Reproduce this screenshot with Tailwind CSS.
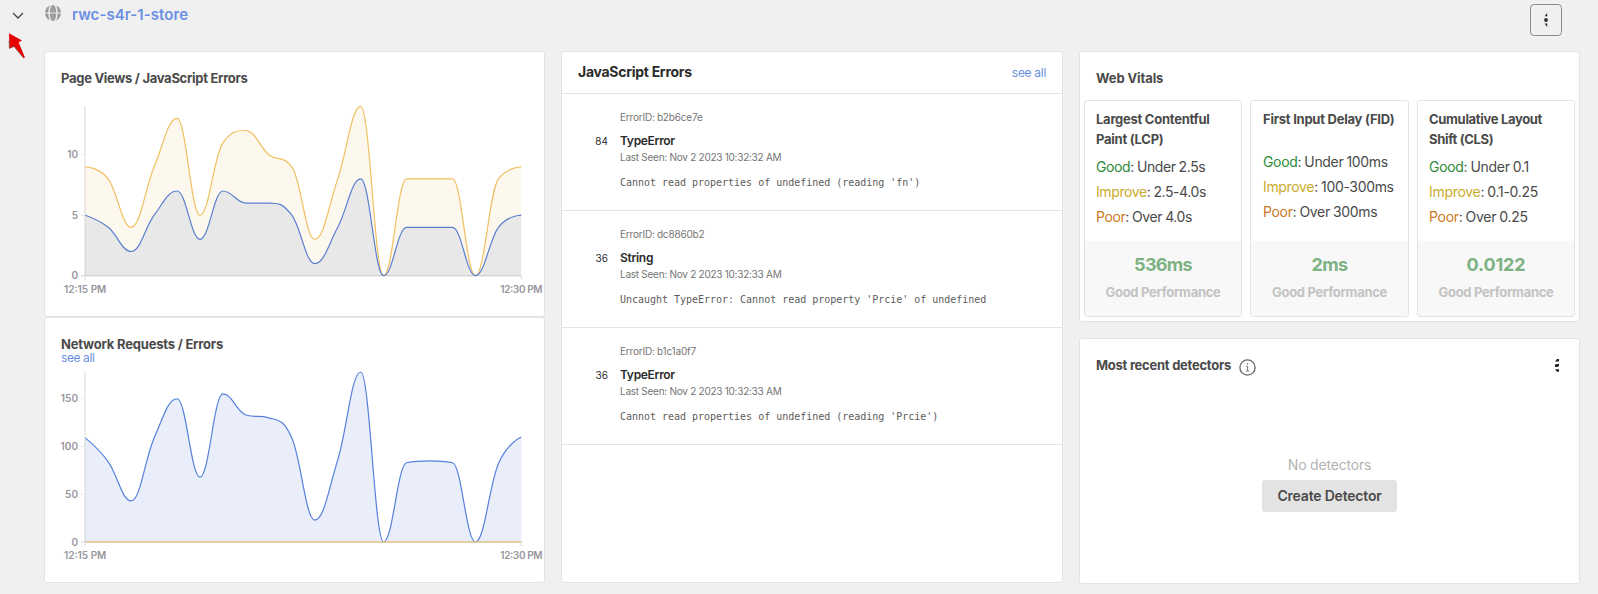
<!DOCTYPE html>
<html lang="en">
<head>
<meta charset="utf-8">
<title>rwc-s4r-1-store</title>
<script src="https://cdn.jsdelivr.net/npm/@tailwindcss/browser@4"></script>
</head>
<body class="w-[1598px] h-[594px] overflow-hidden bg-[#f0f0f0] font-['Inter',sans-serif] text-[#4a4a4a]">
<header class="flex h-[51px] items-start">
  <div class="w-[44px] shrink-0">
    <svg class="block" width="44" height="60" viewBox="0 0 44 60" overflow="visible">
      <path d="M13 13l5 5 5-5" fill="none" stroke="#3c444d" stroke-width="1.3"/>
      <path d="M9 33.2L22 40.6L18.6 42.3L24.8 57.2L23.6 58L14 46.4L9.4 48.4Z" fill="#e60000"/>
      <path d="M24.8 57.2L23.6 58L14 46.4L9.4 48.4L9.1 41" fill="none" stroke="#8d4a4a" stroke-width=".8"/>
    </svg>
  </div>
  <svg class="mt-[5px] ml-px shrink-0" width="16" height="16" viewBox="0 0 16 16">
    <circle cx="8" cy="8" r="8" fill="#999"/>
    <path d="M0 8h16" stroke="#f0f0f0" stroke-width="1" fill="none"/>
    <path d="M8 0v16" stroke="#b4b4b4" stroke-width=".7" fill="none"/>
    <ellipse cx="8" cy="8" rx="4" ry="9" stroke="#f0f0f0" stroke-width="1.4" fill="none"/>
  </svg>
  <a class="ml-[11px] mt-[4px] text-[15px] leading-[22px] font-semibold tracking-[0.07px] text-[#6b8fe3]">rwc-s4r-1-store</a>
  <button class="ml-auto mr-[36px] mt-[4px] flex size-[32px] items-center justify-center rounded-[4px] border border-[#8c8c8c]">
    <svg width="4" height="14" viewBox="0 0 4 14" fill="#2f2f2f"><path d="M3.2 0v3.2H.6z"/><circle cx="2" cy="7" r="1.9"/><path d="M.6 10.6h2.6V14z"/></svg>
  </button>
</header>

<main class="flex h-[533px] pl-[44px] gap-4">
  <section class="flex w-[501px] flex-col">
    <article class="flex h-[266px] flex-col rounded-[3px] border border-[#e3e3e3] bg-white">
      <h2 class="mt-[17px] ml-[16px] h-[19px] text-[13px] leading-[18px] font-bold tracking-[-0.29px] whitespace-nowrap">Page Views / JavaScript Errors</h2>
      <svg id="views" class="block" width="499" height="210" viewBox="45 88 499 210"></svg>
    </article>
    <article class="flex h-[266px] flex-col rounded-[3px] border border-[#e3e3e3] bg-white">
      <h2 class="mt-[17px] ml-[16px] h-[18px] text-[13px] leading-[18px] font-bold tracking-[-0.2px] whitespace-nowrap">Network Requests / Errors</h2>
      <a class="ml-[16px] -mt-[2px] h-[14px] text-[12px] leading-[13px] tracking-[-0.4px] text-[#6b8fe3]">see all</a>
      <svg id="network" class="block" width="499" height="210" viewBox="45 365 499 210"></svg>
    </article>
  </section>

  <section class="h-[532px] w-[502px] rounded-[3px] border border-[#e3e3e3] bg-white">
    <div class="flex h-[42px] items-center justify-between border-b border-[#e3e3e3] px-4">
      <h2 class="-mt-[2px] text-[14px] font-bold tracking-[-0.28px] text-[#2b2b2b]">JavaScript Errors</h2>
      <a class="mt-px text-[12px] tracking-[-0.3px] text-[#6b8fe3]">see all</a>
    </div>
    <div class="flex h-[117px] border-b border-[#e3e3e3]">
      <div class="w-[46px] pt-[40px] text-right text-[10px] leading-[14px] text-[#2b2b2b]">84</div>
      <div class="ml-[12px] pt-[16px] whitespace-nowrap">
        <div class="text-[10px] leading-[14px] tracking-[-0.18px] [word-spacing:-0.5px] text-[#757575]">ErrorID: b2b6ce7e</div>
        <div class="mt-[9px] text-[12px] leading-[16px] font-semibold tracking-[-0.3px] text-[#2b2b2b]">TypeError</div>
        <div class="mt-px text-[10px] leading-[14px] tracking-[-0.26px] text-[#757575]">Last Seen: Nov 2 2023 10:32:32 AM</div>
        <div class="mt-[12px] font-['DejaVu_Sans_Mono',monospace] text-[10px] leading-[14px] tracking-[-0.015px] text-[#5c5c5c]">Cannot read properties of undefined (reading 'fn')</div>
      </div>
    </div>
    <div class="flex h-[117px] border-b border-[#e3e3e3]">
      <div class="w-[46px] pt-[40px] text-right text-[10px] leading-[14px] text-[#2b2b2b]">36</div>
      <div class="ml-[12px] pt-[16px] whitespace-nowrap">
        <div class="text-[10px] leading-[14px] tracking-[-0.18px] [word-spacing:-0.5px] text-[#757575]">ErrorID: dc8860b2</div>
        <div class="mt-[9px] text-[12px] leading-[16px] font-semibold tracking-[-0.3px] text-[#2b2b2b]">String</div>
        <div class="mt-px text-[10px] leading-[14px] tracking-[-0.26px] text-[#757575]">Last Seen: Nov 2 2023 10:32:33 AM</div>
        <div class="mt-[12px] font-['DejaVu_Sans_Mono',monospace] text-[10px] leading-[14px] tracking-[-0.015px] text-[#5c5c5c]">Uncaught TypeError: Cannot read property 'Prcie' of undefined</div>
      </div>
    </div>
    <div class="flex h-[117px] border-b border-[#e3e3e3]">
      <div class="w-[46px] pt-[40px] text-right text-[10px] leading-[14px] text-[#2b2b2b]">36</div>
      <div class="ml-[12px] pt-[16px] whitespace-nowrap">
        <div class="text-[10px] leading-[14px] tracking-[-0.18px] [word-spacing:-0.5px] text-[#757575]">ErrorID: b1c1a0f7</div>
        <div class="mt-[9px] text-[12px] leading-[16px] font-semibold tracking-[-0.3px] text-[#2b2b2b]">TypeError</div>
        <div class="mt-px text-[10px] leading-[14px] tracking-[-0.26px] text-[#757575]">Last Seen: Nov 2 2023 10:32:33 AM</div>
        <div class="mt-[12px] font-['DejaVu_Sans_Mono',monospace] text-[10px] leading-[14px] tracking-[-0.015px] text-[#5c5c5c]">Cannot read properties of undefined (reading 'Prcie')</div>
      </div>
    </div>
  </section>

  <section class="flex w-[501px] flex-col gap-4">
    <article class="h-[271px] rounded-[3px] border border-[#e3e3e3] bg-white px-[4px]">
      <h2 class="mt-[17px] ml-[12px] h-[19px] text-[13px] leading-[18px] font-bold tracking-[-0.1px]">Web Vitals</h2>
      <div class="mt-[12px] flex justify-between">
        <div class="flex h-[217px] w-[158px] flex-col overflow-hidden rounded-[3px] border border-[#e3e3e3]">
          <div class="h-[140px] pl-[11px] pt-[8px] whitespace-nowrap">
            <h3 class="h-[40px] text-[13px] leading-[20px] font-bold tracking-[-0.26px]">Largest Contentful<br>Paint (LCP)</h3>
            <p class="mt-[5px] text-[14px] leading-[25px] tracking-[-0.4px] [word-spacing:-0.5px]"><span class="text-[#2e8b3a]">Good</span>: Under 2.5s<br><span class="text-[#c9ab2a]">Improve</span>: 2.5-4.0s<br><span class="text-[#cc7a22]">Poor</span>: Over 4.0s</p>
          </div>
          <div class="flex-1 bg-[#f8f8f8] pt-[12px] text-center">
            <div class="text-[18px] leading-[24px] font-bold tracking-[-0.7px] text-[#7db283]">536ms</div>
            <div class="mt-[6px] text-[13px] leading-[18px] font-bold tracking-[-0.3px] text-[#c3c3c3]">Good Performance</div>
          </div>
        </div>
        <div class="flex h-[217px] w-[159px] flex-col overflow-hidden rounded-[3px] border border-[#e3e3e3]">
          <div class="h-[140px] pl-[12px] pt-[8px] whitespace-nowrap">
            <h3 class="h-[40px] text-[13px] leading-[20px] font-bold tracking-[-0.24px]">First Input Delay (FID)</h3>
            <p class="text-[14px] leading-[25px] tracking-[-0.33px] [word-spacing:-0.5px]"><span class="text-[#2e8b3a]">Good</span>: Under 100ms<br><span class="text-[#c9ab2a]">Improve</span>: 100-300ms<br><span class="text-[#cc7a22]">Poor</span>: Over 300ms</p>
          </div>
          <div class="flex-1 bg-[#f8f8f8] pt-[12px] text-center">
            <div class="text-[18px] leading-[24px] font-bold tracking-[-0.6px] text-[#7db283]">2ms</div>
            <div class="mt-[6px] text-[13px] leading-[18px] font-bold tracking-[-0.3px] text-[#c3c3c3]">Good Performance</div>
          </div>
        </div>
        <div class="flex h-[217px] w-[158px] flex-col overflow-hidden rounded-[3px] border border-[#e3e3e3]">
          <div class="h-[140px] pl-[11px] pt-[8px] whitespace-nowrap">
            <h3 class="h-[40px] text-[13px] leading-[20px] font-bold tracking-[-0.32px]">Cumulative Layout<br>Shift (CLS)</h3>
            <p class="mt-[5px] text-[14px] leading-[25px] tracking-[-0.3px] [word-spacing:-0.5px]"><span class="text-[#2e8b3a]">Good</span>: Under 0.1<br><span class="text-[#c9ab2a]">Improve</span>: 0.1-0.25<br><span class="text-[#cc7a22]">Poor</span>: Over 0.25</p>
          </div>
          <div class="flex-1 bg-[#f8f8f8] pt-[12px] text-center">
            <div class="text-[18px] leading-[24px] font-bold tracking-[-0.15px] text-[#7db283]">0.0122</div>
            <div class="mt-[6px] text-[13px] leading-[18px] font-bold tracking-[-0.3px] text-[#c3c3c3]">Good Performance</div>
          </div>
        </div>
      </div>
    </article>
    <article class="h-[246px] rounded-[3px] border border-[#e3e3e3] bg-white px-4">
      <div class="mt-[17px] flex h-[21px] items-start">
        <h2 class="text-[13px] leading-[19px] font-bold tracking-[-0.26px] whitespace-nowrap">Most recent detectors</h2>
        <svg class="mt-[3px] ml-[8px]" width="17" height="17" viewBox="0 0 17 17"><circle cx="8.5" cy="8.5" r="7.6" fill="none" stroke="#666" stroke-width="1.3"/><path d="M7.1 7.3h1.5v4.4M6.9 11.9h3.3" fill="none" stroke="#777" stroke-width="1"/><circle cx="8.5" cy="4.9" r=".8" fill="#777"/></svg>
        <svg class="mt-[3px] mr-[4px] ml-auto" width="4" height="13" viewBox="0 0 4 13" fill="#1f1f1f"><path d="M0 2.4L2 0H4v2.4z"/><path d="M0 5.4L4 4.8v2L2.6 8H0z"/><path d="M0 10.2h4v2.6H2z"/></svg>
      </div>
      <div class="mt-[78px] flex flex-col items-center">
        <div class="text-[14px] leading-[20px] tracking-[-0.2px] text-[#b3b3b3]">No detectors</div>
        <button class="mt-[5px] h-[32px] w-[135px] rounded-[3px] bg-[#e3e3e3] text-[14px] leading-[20px] font-semibold tracking-[-0.2px]">Create Detector</button>
      </div>
    </article>
  </section>
</main>

<script>
const NS = 'http://www.w3.org/2000/svg';
const LEFT = 85.3, STEP = 22.95, RIGHT = LEFT + STEP * 19;

function add(svg, tag, attrs, text) {
  const el = document.createElementNS(NS, tag);
  for (const k in attrs) el.setAttribute(k, attrs[k]);
  if (text) el.textContent = text;
  svg.appendChild(el);
}

// Spline whose control points never overshoot the neighbouring values.
function spline(pts) {
  let d = `M${pts[0].x} ${pts[0].y}`, rx = pts[0].x, ry = pts[0].y;
  for (let i = 1; i < pts.length; i++) {
    const p = pts[i], a = pts[i - 1], b = pts[i + 1];
    let lx = p.x, ly = p.y, nx = p.x, ny = p.y;
    if (b) {
      lx = (1.5 * p.x + a.x) / 2.5; ly = (1.5 * p.y + a.y) / 2.5;
      nx = (1.5 * p.x + b.x) / 2.5; ny = (1.5 * p.y + b.y) / 2.5;
      const c = (ny - ly) * (nx - p.x) / (nx - lx) + p.y - ny;
      ly += c; ny += c;
      if (ly > a.y && ly > p.y) { ly = Math.max(a.y, p.y); ny = 2 * p.y - ly; }
      else if (ly < a.y && ly < p.y) { ly = Math.min(a.y, p.y); ny = 2 * p.y - ly; }
      if (ny > b.y && ny > p.y) { ny = Math.max(b.y, p.y); ly = 2 * p.y - ny; }
      else if (ny < b.y && ny < p.y) { ny = Math.min(b.y, p.y); ly = 2 * p.y - ny; }
    }
    d += `C${rx} ${ry} ${lx} ${ly} ${p.x} ${p.y}`;
    rx = nx; ry = ny;
  }
  return d;
}

function chart(id, top, base, unit, ticks, series) {
  const svg = document.getElementById(id);
  add(svg, 'path', { d: `M85 ${top}V${base + 4}M${RIGHT} ${base}v4`, stroke: '#e8e8e8', 'stroke-width': 1.6, fill: 'none' });
  add(svg, 'path', { d: `M81 ${base}H${RIGHT}`, stroke: '#e0e0e0', 'stroke-width': 1.6, fill: 'none' });
  for (const t of ticks) {
    const y = base - t * unit;
    if (t) add(svg, 'path', { d: `M81 ${y}h4`, stroke: '#e8e8e8', 'stroke-width': 1 });
    add(svg, 'text', { x: 78.3, y: y + 3.6, 'text-anchor': 'end', 'font-size': 10, 'font-weight': 600, 'letter-spacing': .15, fill: '#96969c' }, String(t));
  }
  for (const s of series) {
    const d = spline(s.values.map((v, i) => ({ x: LEFT + STEP * i, y: base - v * unit })));
    add(svg, 'path', { d: `${d}L${RIGHT} ${base}L${LEFT} ${base}Z`, fill: s.area || 'none', 'fill-opacity': .12 });
    add(svg, 'path', { d, fill: 'none', stroke: s.color, 'stroke-width': s.width || 1.2, 'stroke-opacity': s.alpha || 1 });
  }
  add(svg, 'text', { x: 64, y: base + 17.3, 'font-size': 10, 'font-weight': 600, fill: '#96969c', textLength: 42.3 }, '12:15 PM');
  add(svg, 'text', { x: 500.3, y: base + 17.3, 'font-size': 10, 'font-weight': 600, fill: '#96969c', textLength: 42.3 }, '12:30 PM');
}

chart('views', 106, 275.7, 12.1, [0, 5, 10], [
  { color: '#f0c062', area: '#eec571', values: [9,8,4,9,13,5,11,12,10,9,3,8,14,0,8,8,8,0,8,9] },
  { color: '#5b7fd0', area: '#567bbc', values: [5,4,2,5,7,3,7,6,6,5,1,4,8,0,4,4,4,0,4,5] },
]);
chart('network', 372, 542, .955, [0, 50, 100, 150], [
  { color: '#5580dd', area: '#5071d5', values: [109,84,43,109,150,68,155,133,130,109,23,86,178,0,83,85,83,0,82,110] },
  { color: '#e8c580', width: 1.6, alpha: .85, values: new Array(20).fill(0) },
]);
</script>
</body>
</html>
